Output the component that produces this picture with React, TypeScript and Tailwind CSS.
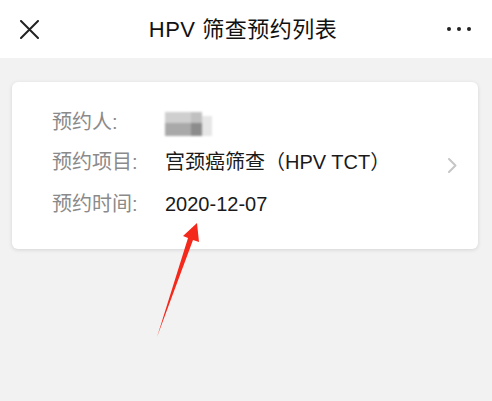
const font = { fontFamily: '"Liberation Sans", "Noto Sans CJK SC", sans-serif' }

function Row({ label, children, className = '' }: { label: string; children: React.ReactNode; className?: string }) {
  return (
    <div className={`flex items-center h-10 ${className}`}>
      <div className="w-[113px] text-[#8a8a8a] text-[20px]">{label}</div>
      <div className="text-[#1a1a1a] text-[20px]">{children}</div>
    </div>
  )
}

export default function App() {
  return (
    <div className="w-[492px] h-[401px] bg-[#f2f2f2] relative overflow-hidden" style={font}>
      {/* 顶部导航 */}
      <div className="h-[58px] bg-white flex items-center justify-between px-5">
        <svg width="19" height="19" viewBox="0 0 19 19" className="mt-[1px]">
          <path d="M1 1 L18 18 M18 1 L1 18" stroke="#222" strokeWidth="2" strokeLinecap="round" />
        </svg>
        <div className="text-[22px] text-[#111] tracking-[0.5px]">HPV 筛查预约列表</div>
        <div className="flex gap-[6px] pr-[1px]">
          <span className="w-1 h-1 rounded-full bg-[#222]" />
          <span className="w-1 h-1 rounded-full bg-[#222]" />
          <span className="w-1 h-1 rounded-full bg-[#222]" />
        </div>
      </div>

      {/* 卡片 */}
      <div className="mx-3 mt-6 w-[466px] bg-white rounded-md shadow-[0_1px_4px_rgba(0,0,0,0.12)] pl-10 pt-5 pb-[25px] flex items-center">
        <div className="flex-1">
          <Row label="预约人:">
            <div className="flex w-[47px] h-[24px] blur-[1px] mt-1">
              <div className="flex flex-col w-[26px]">
                <div className="h-[11px] bg-[#cfcfcf]" />
                <div className="h-[13px] bg-[#a9a9a9]" />
              </div>
              <div className="flex flex-col w-[11px]">
                <div className="h-[11px] bg-[#c0c0c0]" />
                <div className="h-[13px] bg-[#8c8c8c]" />
              </div>
              <div className="w-[10px] h-[20px] mt-[4px] bg-[#e6e6e6]" />
            </div>
          </Row>
          <Row label="预约项目:">宫颈癌筛查（HPV TCT）</Row>
          <Row label="预约时间:" className="mt-[2px]">2020-12-07</Row>
        </div>
        <svg width="11" height="17" viewBox="0 0 11 17" className="mr-5 mt-[4px]">
          <path d="M2 2 L8.5 8.5 L2 15" stroke="#c6c6c6" strokeWidth="2" fill="none" strokeLinecap="round" strokeLinejoin="round" />
        </svg>
      </div>

      {/* 红色箭头 */}
      <svg className="absolute left-0 top-0" width="492" height="401" viewBox="0 0 492 401">
        <polygon points="157,337 188,238 183,236 197,223 199,242 193,240" fill="#f5281c" />
      </svg>
    </div>
  )
}
